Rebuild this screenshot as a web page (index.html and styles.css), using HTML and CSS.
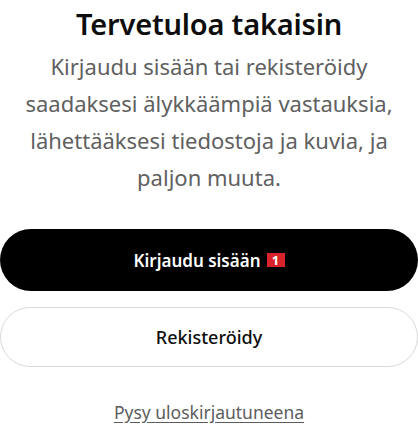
FILE: index.html
```html
<!DOCTYPE html>
<html>
    <head>
        <title>Tervetuloa takaisin</title>
        <meta charset="utf-8" />
        <link rel="stylesheet" href="styles.css">
    </head>
    <body>
        <main class="welcome">
            <h1 class="title">Tervetuloa takaisin</h1>
            <p class="lead">Kirjaudu sisään tai rekisteröidy saadaksesi älykkäämpiä vastauksia, lähettääksesi tiedostoja ja kuvia, ja paljon muuta.</p>

            <div class="actions">
                <button class="btn btn-primary">Kirjaudu sisään<span class="badge">1</span></button>
                <button class="btn btn-secondary">Rekisteröidy</button>
            </div>

            <a class="stay" href="#">Pysy uloskirjautuneena</a>
        </main>
    </body>
</html>
```

FILE: styles.css
```css
* {
    margin: 0;
    padding: 0;
    box-sizing: border-box;
}
body {
    font-family: "Noto Sans", "Open Sans", sans-serif;
    background-color: #fff;
    color: #0d0d0d;
}
.welcome {
    display: flex;
    flex-direction: column;
    align-items: center;
    text-align: center;
    padding-top: 4px;
}
.title {
    font-size: 29px;
    font-weight: 600;
    line-height: 40px;
    letter-spacing: -0.2px;
}
.lead {
    font-size: 22px;
    line-height: 37px;
    color: #606060;
    max-width: 384px;
    margin-top: 4px;
}
.actions {
    display: flex;
    flex-direction: column;
    gap: 16px;
    width: 100%;
    margin-top: 33px;
}
.btn {
    font-family: inherit;
    font-size: 17px;
    width: 100%;
    border-radius: 31px;
    display: flex;
    align-items: center;
    justify-content: center;
    cursor: pointer;
}
.btn-primary {
    background-color: #000;
    color: #fff;
    font-weight: 600;
    border: 0;
    height: 62px;
}
.btn-secondary {
    background-color: #fff;
    color: #0d0d0d;
    border: 1px solid #d9d9d9;
    font-size: 18px;
    font-weight: 500;
    height: 60px;
}
.badge {
    display: inline-flex;
    align-items: center;
    justify-content: center;
    background-color: #d9232b;
    color: #fff;
    font-size: 13px;
    font-weight: 700;
    width: 18px;
    height: 14px;
    margin-left: 6px;
}
.stay {
    margin-top: 33px;
    font-size: 17.5px;
    color: #5d5d5d;
    text-decoration: underline;
    text-underline-offset: 3px;
}
```
